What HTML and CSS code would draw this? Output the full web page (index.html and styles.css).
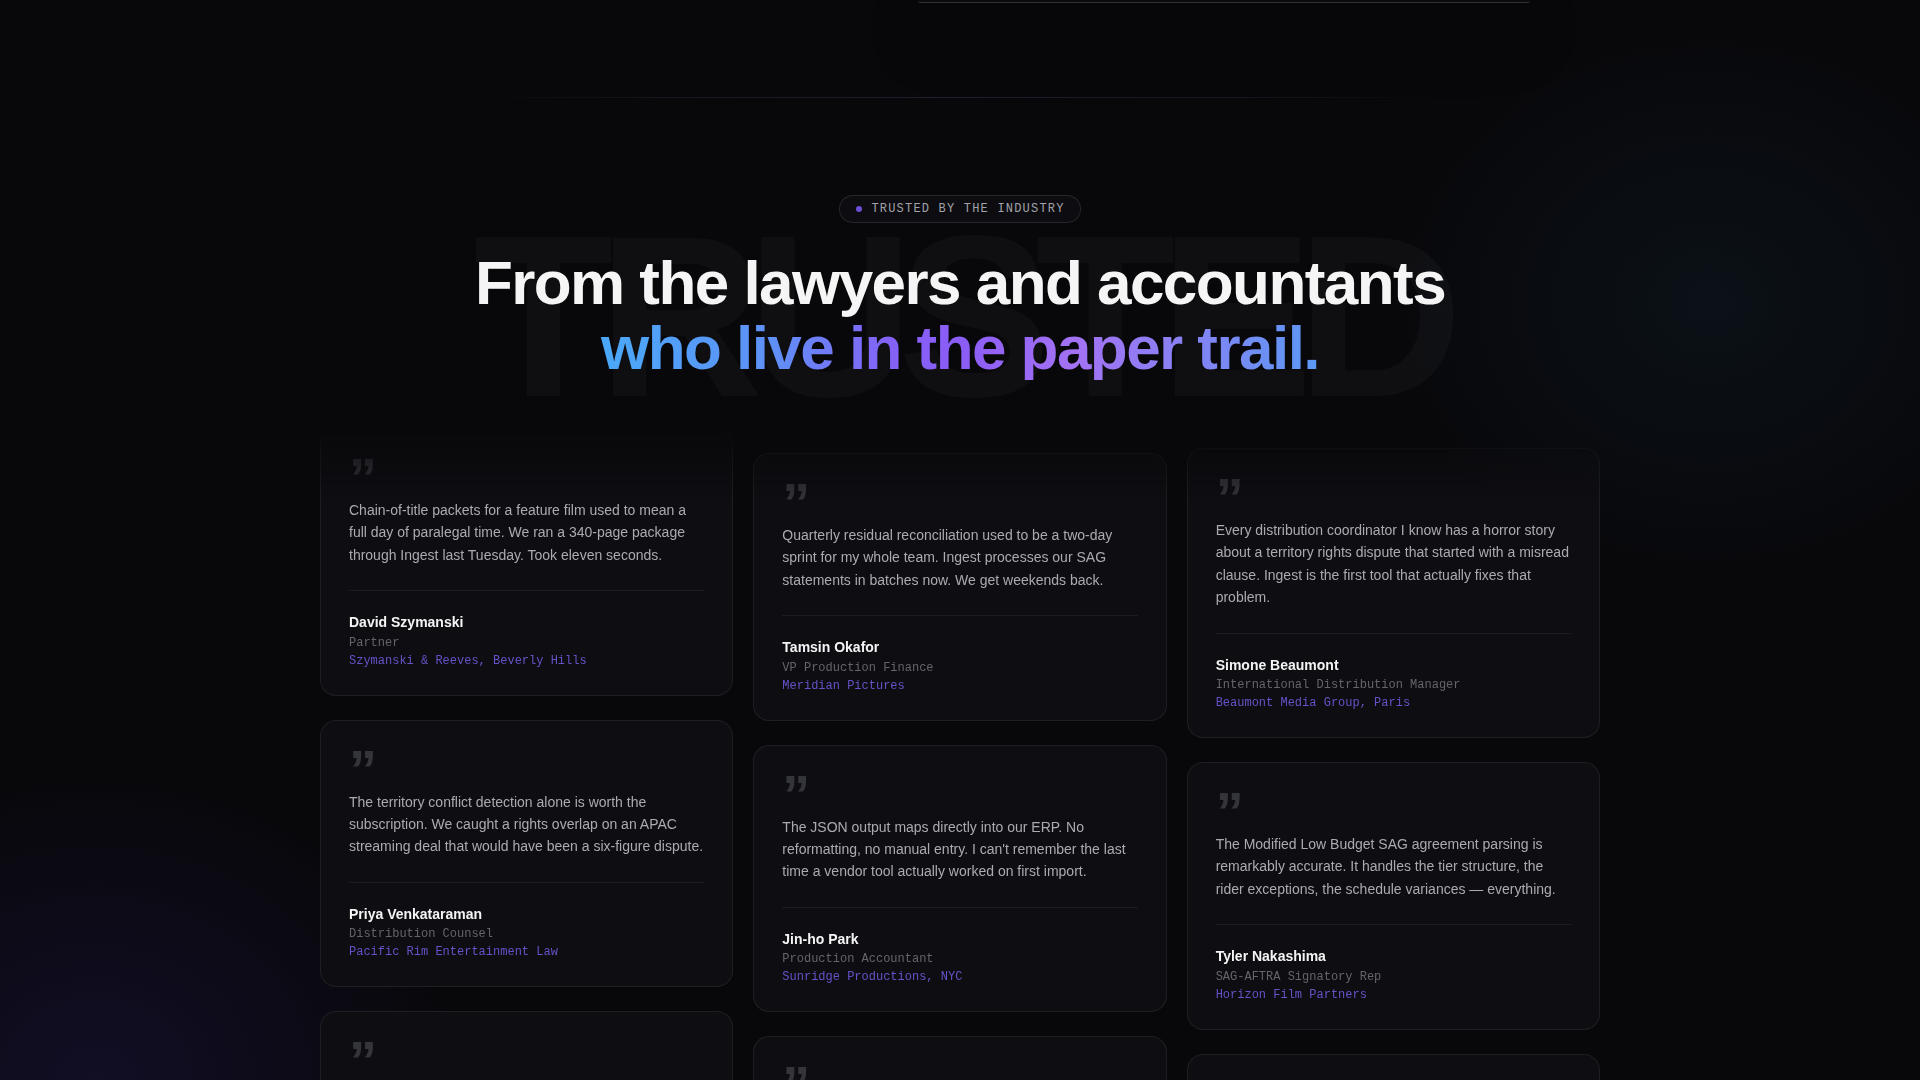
FILE: index.html
```html
<!DOCTYPE html>
<html lang="en">
<head>
<meta charset="utf-8">
<title>Trusted by the industry</title>
<link rel="stylesheet" href="styles.css">
</head>
<body>
<div class="page">
  <div class="prev-edge"></div>
  <div class="rule"></div>

  <section class="testimonials">
    <header class="intro">
      <div class="watermark" aria-hidden="true">TRUSTED</div>
      <div class="badge"><span class="badge-dot"></span><span class="badge-text">TRUSTED BY THE INDUSTRY</span></div>
      <h2 class="headline">From the lawyers and accountants<span class="headline-accent">who live in the paper trail.</span></h2>
    </header>

    <div class="wall">
      <div class="col col-a">
        <article class="card">
          <div class="quote-mark">&rdquo;</div>
          <p class="text">Chain-of-title packets for a feature film used to mean a full day of paralegal time. We ran a 340-page package through Ingest last Tuesday. Took eleven seconds.</p>
          <div class="author">
            <div class="name">David Szymanski</div>
            <div class="role">Partner</div>
            <div class="company">Szymanski &amp; Reeves, Beverly Hills</div>
          </div>
        </article>
        <article class="card">
          <div class="quote-mark">&rdquo;</div>
          <p class="text">The territory conflict detection alone is worth the subscription. We caught a rights overlap on an APAC streaming deal that would have been a six-figure dispute.</p>
          <div class="author">
            <div class="name">Priya Venkataraman</div>
            <div class="role">Distribution Counsel</div>
            <div class="company">Pacific Rim Entertainment Law</div>
          </div>
        </article>
        <article class="card">
          <div class="quote-mark">&rdquo;</div>
          <p class="text">We used to chase missing assignments across six inboxes. Ingest flags every gap in the chain before the E&amp;O insurer ever asks.</p>
          <div class="author">
            <div class="name">Marcus Feld</div>
            <div class="role">Senior Paralegal</div>
            <div class="company">Feld Lazarus LLP, Century City</div>
          </div>
        </article>
      </div>

      <div class="col col-b">
        <article class="card">
          <div class="quote-mark">&rdquo;</div>
          <p class="text">Quarterly residual reconciliation used to be a two-day sprint for my whole team. Ingest processes our SAG statements in batches now. We get weekends back.</p>
          <div class="author">
            <div class="name">Tamsin Okafor</div>
            <div class="role">VP Production Finance</div>
            <div class="company">Meridian Pictures</div>
          </div>
        </article>
        <article class="card">
          <div class="quote-mark">&rdquo;</div>
          <p class="text">The JSON output maps directly into our ERP. No reformatting, no manual entry. I can't remember the last time a vendor tool actually worked on first import.</p>
          <div class="author">
            <div class="name">Jin-ho Park</div>
            <div class="role">Production Accountant</div>
            <div class="company">Sunridge Productions, NYC</div>
          </div>
        </article>
        <article class="card">
          <div class="quote-mark">&rdquo;</div>
          <p class="text">Cost reports, hot costs, payroll breakdowns — it reads all of them. Our auditors stopped asking for the source PDFs.</p>
          <div class="author">
            <div class="name">Elena Marchetti</div>
            <div class="role">Financial Controller</div>
            <div class="company">Lumen Studios, Toronto</div>
          </div>
        </article>
      </div>

      <div class="col col-c">
        <article class="card">
          <div class="quote-mark">&rdquo;</div>
          <p class="text">Every distribution coordinator I know has a horror story about a territory rights dispute that started with a misread clause. Ingest is the first tool that actually fixes that problem.</p>
          <div class="author">
            <div class="name">Simone Beaumont</div>
            <div class="role">International Distribution Manager</div>
            <div class="company">Beaumont Media Group, Paris</div>
          </div>
        </article>
        <article class="card">
          <div class="quote-mark">&rdquo;</div>
          <p class="text">The Modified Low Budget SAG agreement parsing is remarkably accurate. It handles the tier structure, the rider exceptions, the schedule variances — everything.</p>
          <div class="author">
            <div class="name">Tyler Nakashima</div>
            <div class="role">SAG-AFTRA Signatory Rep</div>
            <div class="company">Horizon Film Partners</div>
          </div>
        </article>
        <article class="card">
          <div class="quote-mark">&rdquo;</div>
          <p class="text">Music cue sheets used to be the last thing anyone wanted to touch. Now they are the first thing we clear.</p>
          <div class="author">
            <div class="name">Noah Brennan</div>
            <div class="role">Clearance Coordinator</div>
            <div class="company">Northlight Post, Vancouver</div>
          </div>
        </article>
      </div>
    </div>
  </section>
</div>
</body>
</html>
```

FILE: styles.css
```css
* {
  box-sizing: border-box;
}

html, body {
  margin: 0;
  padding: 0;
}

body {
  background: #08080b;
  font-family: "Liberation Sans", Arial, sans-serif;
  color: #f4f4f5;
  overflow: hidden;
}

.page {
  height: 1080px;
  overflow: hidden;
  background:
    radial-gradient(520px 440px at 5% 100%, rgba(74, 52, 196, 0.14), transparent 70%),
    radial-gradient(440px 380px at 89% 28%, rgba(28, 70, 92, 0.15), transparent 72%),
    #08080b;
}

/* bottom edge of the previous section's window */
.prev-edge {
  width: 612px;
  height: 3px;
  margin-left: 918px;
  background: #0b0b0e;
  border-bottom: 1px solid rgba(255, 255, 255, 0.16);
  border-radius: 0 0 6px 6px;
  box-shadow: 0 28px 60px rgba(0, 0, 0, 0.75);
}

.rule {
  width: 960px;
  height: 1px;
  margin: 94px auto 0;
  background: linear-gradient(90deg, transparent, rgba(160, 150, 230, 0.12) 25%, rgba(170, 160, 240, 0.14) 50%, rgba(160, 150, 230, 0.12) 75%, transparent);
}

.testimonials {
  padding-top: 97px;
}

.intro {
  position: relative;
  display: flex;
  flex-direction: column;
  align-items: center;
}

.watermark {
  position: absolute;
  top: 7px;
  left: 50%;
  transform: translateX(-50%);
  font-size: 230px;
  line-height: 1;
  font-weight: 700;
  letter-spacing: -0.07em;
  white-space: nowrap;
  color: rgba(255, 255, 255, 0.03);
  pointer-events: none;
  z-index: 0;
}

.badge {
  position: relative;
  z-index: 1;
  height: 28px;
  display: flex;
  align-items: center;
  gap: 9px;
  padding: 0 15px 0 16px;
  border: 1px solid rgba(255, 255, 255, 0.11);
  border-radius: 999px;
  background: #0d0d11;
}

.badge-dot {
  width: 6px;
  height: 6px;
  border-radius: 50%;
  background: #6c4fd6;
}

.badge-text {
  font-family: "Liberation Mono", monospace;
  font-size: 12px;
  letter-spacing: 0.1em;
  color: #a2a2aa;
}

.headline {
  position: relative;
  z-index: 1;
  margin: 27px 0 0;
  font-size: 62px;
  line-height: 65px;
  font-weight: 700;
  letter-spacing: -0.025em;
  text-align: center;
  color: #f5f5f6;
}

.headline-accent {
  display: block;
  width: fit-content;
  margin: 0 auto;
  background: linear-gradient(90deg, #4aa9f8 0%, #5f90f6 24%, #8462f6 40%, #8b5cf6 50%, #a372f3 66%, #8a80f4 80%, #5a98f3 100%);
  -webkit-background-clip: text;
  background-clip: text;
  color: transparent;
}

.wall {
  width: 1280px;
  height: 720px;
  margin: 41px auto 0;
  display: grid;
  grid-template-columns: repeat(3, 1fr);
  column-gap: 20px;
  align-items: start;
  -webkit-mask-image: linear-gradient(to bottom, transparent 0, #000 80px, #000 calc(100% - 60px), transparent 100%);
  mask-image: linear-gradient(to bottom, transparent 0, #000 80px, #000 calc(100% - 60px), transparent 100%);
}

.col {
  display: flex;
  flex-direction: column;
  gap: 24px;
}

.col-a { padding-top: 7px; }
.col-b { padding-top: 32px; }
.col-c { padding-top: 27px; }

.card {
  background: #0e0e12;
  border: 1px solid rgba(255, 255, 255, 0.075);
  border-radius: 16px;
  padding: 28px 28px 25px;
}

.quote-mark {
  height: 24px;
  margin-bottom: 18px;
  font-size: 56px;
  line-height: 42px;
  font-weight: 700;
  color: #34343b;
}

.text {
  margin: 0 0 24px;
  font-size: 14px;
  line-height: 1.6;
  color: #aaaab2;
}

.author {
  border-top: 1px solid rgba(255, 255, 255, 0.06);
  padding-top: 20px;
}

.name {
  font-size: 14px;
  line-height: 1.6;
  font-weight: 700;
  color: #f4f4f5;
}

.role,
.company {
  font-family: "Liberation Mono", monospace;
  font-size: 12px;
  line-height: 18px;
}

.role {
  color: #64646c;
}

.company {
  color: #6652c8;
}
```
